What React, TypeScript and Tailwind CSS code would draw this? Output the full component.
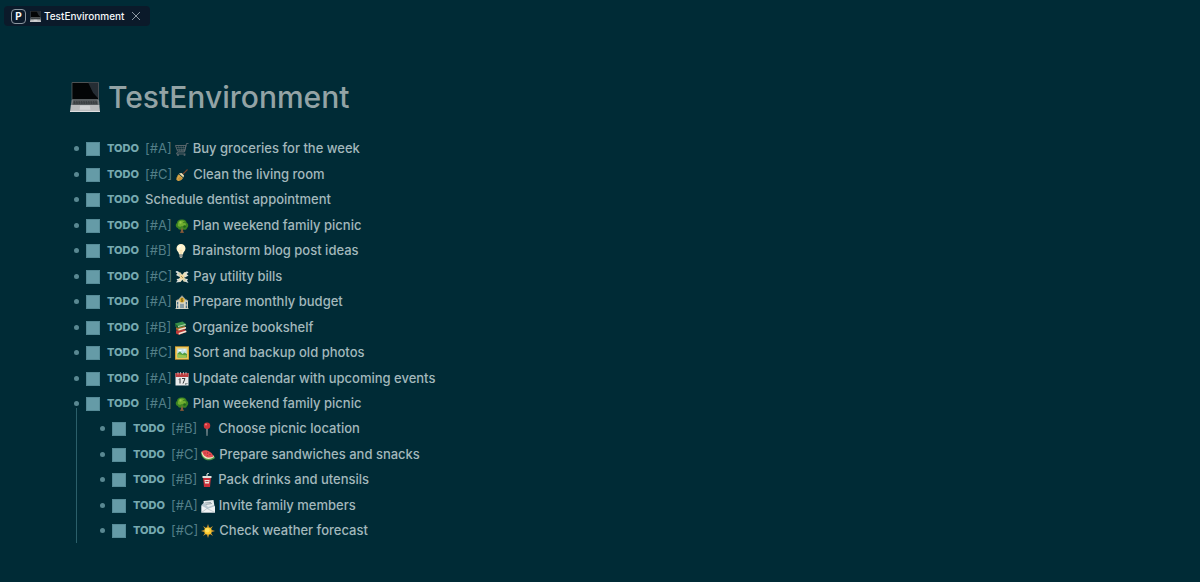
import type { ReactNode } from 'react';

type Task = { icon?: string; priority?: 'A' | 'B' | 'C'; text: string; children?: Task[] };

const tasks: Task[] = [
  { priority: 'A', icon: 'cart', text: 'Buy groceries for the week' },
  { priority: 'C', icon: 'broom', text: 'Clean the living room' },
  { text: 'Schedule dentist appointment' },
  { priority: 'A', icon: 'tree', text: 'Plan weekend family picnic' },
  { priority: 'B', icon: 'bulb', text: 'Brainstorm blog post ideas' },
  { priority: 'C', icon: 'money', text: 'Pay utility bills' },
  { priority: 'A', icon: 'bank', text: 'Prepare monthly budget' },
  { priority: 'B', icon: 'books', text: 'Organize bookshelf' },
  { priority: 'C', icon: 'photo', text: 'Sort and backup old photos' },
  { priority: 'A', icon: 'calendar', text: 'Update calendar with upcoming events' },
  {
    priority: 'A',
    icon: 'tree',
    text: 'Plan weekend family picnic',
    children: [
      { priority: 'B', icon: 'pin', text: 'Choose picnic location' },
      { priority: 'C', icon: 'melon', text: 'Prepare sandwiches and snacks' },
      { priority: 'B', icon: 'drink', text: 'Pack drinks and utensils' },
      { priority: 'A', icon: 'mail', text: 'Invite family members' },
      { priority: 'C', icon: 'sun', text: 'Check weather forecast' },
    ],
  },
];

const drawings: Record<string, ReactNode> = {
  laptop: (
    <>
      <rect x="1.5" y="0" width="25.5" height="17" rx="1" fill="#5b6063" />
      <rect x="2.2" y=".8" width="24" height="15.2" fill="#030506" />
      <path d="M17 .8h9.2v14.4L21.5 10z" fill="#252d34" />
      <path d="M1.5 16.5h25.5l.6 5.5H.8z" fill="#777c7e" />
      <path d="M3 17.2h22.4l.6 3.8H2.4z" fill="#34393b" />
      <path d="M3 18.4h22.4M2.8 19.7h23" stroke="#797e80" strokeWidth=".5" strokeDasharray="1 .6" />
      <path d="M.8 21.5h26.6l.6 6.5H0z" fill="#b9bbbc" />
      <path d="M9.5 22h9l.6 4H8.9z" fill="#d0d1d2" />
      <path d="M0 27h28v1H0z" fill="#dedfe0" />
    </>
  ),
  cart: (
    <g fill="none" stroke="#626c70" strokeWidth="1.8">
      <path d="M27 3h-4l-4 17H5l-2 4h18" />
      <path d="M1 7h21l-3 11H5z" />
      <path d="M2 11h19M4 15h16M7 7l2 11M12 7l1 11M17 7l-1 11" strokeWidth="1.1" />
      <circle cx="6" cy="26" r="1.3" />
      <circle cx="19" cy="26" r="1.3" />
    </g>
  ),
  broom: (
    <>
      <path d="M14 14L25 3" stroke="#7a432a" strokeWidth="2.2" />
      <path d="M7 12l9 8c-2 4-6 6-10 6l-4-3 2-1-2-2 3-2-1-2c2-1 3-2 3-4z" fill="#d9a647" />
      <path d="M8 11l9 8 1-4-5-5z" fill="#f1e2b3" />
      <path d="M11 18l-5 5M13 20l-4 4" stroke="#8d5b22" strokeWidth="1" />
    </>
  ),
  tree: (
    <>
      <path d="M12 16h5l-1 7 2 5h-8l2-5z" fill="#775035" />
      <path d="M14 1c5-1 9 3 9 6 5 3 4 9 1 11-1 4-6 5-9 2-4 3-9 1-9-2-5-1-6-8-2-10 0-5 5-8 10-7z" fill="#3b8422" />
      <path d="M13 3c4-1 7 2 7 5 3 2 2 5 0 6-4 2-6-1-8 1-4 2-8-1-6-5 0-4 3-7 7-7z" fill="#70ad30" />
      <circle cx="11" cy="7" r="2.3" fill="#9aca49" />
      <circle cx="19" cy="15" r="2.5" fill="#20621c" />
      <circle cx="18" cy="7" r="1.3" fill="#246a1c" />
      <path d="M14 17v9" stroke="#a17348" strokeWidth="1.3" />
    </>
  ),
  bulb: (
    <>
      <path d="M5 9a9 9 0 0118 0c0 5-5 7-5 12h-8c0-5-5-7-5-12z" fill="#fff4cd" />
      <path d="M9 9a5 5 0 015-5" stroke="#fff" strokeWidth="2" fill="none" />
      <path d="M13 20l-1-8 2 1 2-1-1 8" fill="none" stroke="#e8c88c" strokeWidth=".8" />
      <path d="M11 21h6v5l-2 2h-2l-2-2z" fill="#b5b6ae" />
      <path d="M11 23h6m-6 2h6" stroke="#626a65" strokeWidth=".8" />
    </>
  ),
  money: (
    <>
      <path d="M11 11C9 2 3 0 1 4l4 3-3 3 7 4zM17 11c2-9 8-10 10-6l-4 3 4 3-7 4zM10 17l-7 1 2 3-3 4 8-1 4-5zM18 17l8 1-2 3 3 5-8-3-4-4z" fill="#d9dedb" />
      <path d="M5 7l5-3 13 16-5 4z" fill="#d6d2ae" />
      <path d="M24 8l-5-4L6 20l5 4z" fill="#e9e1c2" />
      <circle cx="14" cy="14" r="4.5" fill="#f5d79a" />
      <path d="M12 12l4 4" stroke="#8e8656" strokeWidth="1.5" />
    </>
  ),
  bank: (
    <>
      <path d="M2 11l5-2 7-8 7 8 5 2v16H2z" fill="#d2cebb" />
      <path d="M1 11l6-3v2l-5 2zM27 11l-6-3v2l5 2zM6 9l8-8 8 8h-2l-6-5-6 5z" fill="#868f91" />
      <circle cx="14" cy="10" r="5" fill="#e2b52f" />
      <path d="M16 8c-3-2-5 1-2 2s2 4-2 2M14 6v8" fill="none" stroke="#644b15" strokeWidth="1.2" />
      <path d="M4 14h3v5H4zM21 14h3v5h-3zM4 21h3v5H4zM21 21h3v5h-3zM11 18h6v9h-6z" fill="#496f89" />
      <path d="M8 14v13M20 14v13M14 18v9M1 27h26" stroke="#f0ead7" strokeWidth="1.5" />
    </>
  ),
  books: (
    <>
      <path d="M4 19l17-3 4 6-15 6-6-3z" fill="#bc3938" />
      <path d="M9 24l15-5 1 3-15 5z" fill="#f2e9d8" />
      <path d="M4 13l17-3 4 4-15 6-6-3z" fill="#ad682b" />
      <path d="M9 16l15-4v3L9 19z" fill="#f2e9d8" />
      <path d="M2 5l15-4 7 5v3L8 14 2 10z" fill="#38934a" />
      <path d="M8 10l15-4v2L8 12z" fill="#bcd6b4" />
      <path d="M2 5l6 5v4l-6-4z" fill="#20622f" />
    </>
  ),
  photo: (
    <>
      <rect width="28" height="27" y=".5" fill="#c5972b" />
      <rect x="1.5" y="2" width="25" height="24" fill="#edc75c" />
      <rect x="4.5" y="5" width="19" height="18" fill="#c3e3e8" />
      <path d="M5 15l5-4 5 5 4-3 5 3v7H5z" fill="#529d43" />
      <path d="M5 17c5-2 10 3 18 1v5H5z" fill="#98c64d" />
      <path d="M7 9h6m4-1h4" stroke="#fff" strokeWidth="2" />
    </>
  ),
  calendar: (
    <>
      <path d="M1 2h26v25H1z" fill="#e8eaea" />
      <path d="M1 2h26v8H1z" fill="#bb3d3f" />
      <path d="M6 0v5m5-5v5m6-5v5m5-5v5" stroke="#dadddd" strokeWidth="1.4" />
      <path d="M8 15l2-2v10m4-10h6l-4 10" fill="none" stroke="#34393b" strokeWidth="2" />
      <path d="M20 27v-5h7z" fill="#8d9698" />
    </>
  ),
  pin: (
    <>
      <path d="M13 12h2l-.5 15-.5 1-.5-1z" fill="#a5afb2" stroke="#a5afb2" strokeWidth=".6" />
      <circle cx="14" cy="7.5" r="6.5" fill="#ce3439" />
      <circle cx="12" cy="5" r="2" fill="#f2797b" />
    </>
  ),
  melon: (
    <>
      <path d="M0 8c0 15 15 22 28 12l-2-4z" fill="#4e9848" />
      <path d="M1 7c1 14 14 19 25 11l-1-3z" fill="#f2ebca" />
      <path d="M2 6c2 12 13 16 23 11C21 7 11 2 2 6z" fill="#e64c50" />
      <path d="M8 9v2m5-2v2m-1 3l1 1m5-3v2" stroke="#42262c" strokeWidth="1.3" />
    </>
  ),
  drink: (
    <>
      <path d="M14 8V2l4-2" fill="none" stroke="#f0f0e7" strokeWidth="2" />
      <path d="M6 8h16l-2 20H8z" fill="#c92f3a" />
      <path d="M5 6h18v4H5z" fill="#e2e4df" />
      <path d="M9 14h10l-1 7h-8z" fill="#ece7dc" />
      <path d="M11 17h6" stroke="#c24951" strokeWidth="2" />
    </>
  ),
  mail: (
    <>
      <path d="M5 4l20-2 2 13-20 3z" fill="#e9edee" />
      <path d="M8 8l12-1M9 11l13-2" stroke="#758890" strokeWidth="1.4" />
      <path d="M1 12l5-5 8 9 12-4 2 15H1z" fill="#b8c8d0" />
      <path d="M1 13l12 7 15-6v13H1z" fill="#f1f3f4" />
      <path d="M1 27l11-8 16 8" fill="none" stroke="#a9b8be" strokeWidth="1.3" />
    </>
  ),
  sun: (
    <>
      <path d="M14 0l2 7h-4zM14 28l2-7h-4zM0 14l7-2v4zM28 14l-7-2v4zM4 4l6 4-2 2zM24 4l-6 4 2 2zM4 24l6-4-2-2zM24 24l-6-4 2-2z" fill="#e6a32e" />
      <circle cx="14" cy="14" r="7.5" fill="#ffc92d" />
      <circle cx="12.5" cy="12.5" r="4.5" fill="#ffe05b" />
    </>
  ),
};

function Emoji({ name, className }: { name: string; className: string }) {
  return (
    <svg viewBox="0 0 28 28" aria-hidden="true" className={`shrink-0 ${className}`}>
      {drawings[name]}
    </svg>
  );
}

function TaskList({ items, nested = false }: { items: Task[]; nested?: boolean }) {
  return (
    <ul className={nested ? '-mt-2 ml-1.5 border-l border-[#2b5f6a] pt-2 pl-[19px]' : ''}>
      {items.map((task, index) => (
        <li key={index} className="even:pt-px">
          <div className="flex h-[25px] items-center">
            <span className="flex w-3 shrink-0 justify-center">
              <span className="size-[5px] rounded-full bg-[#598892]" />
            </span>
            <label className="ml-1 flex items-center whitespace-nowrap">
              <input
                type="checkbox"
                className="size-3.5 shrink-0 appearance-none border border-[#568b97] bg-[#659ba7] checked:bg-[#2a7f90]"
              />
              <span className="ml-[7px] text-[11px] font-extrabold text-[#76a9b0]">TODO</span>
              {task.priority && <span className="ml-1.5 text-[#537f88]">[#{task.priority}]</span>}
              {task.icon && <Emoji name={task.icon} className="ml-[3px] size-3.5" />}
              <span className={task.icon ? 'ml-1 font-medium' : 'ml-1.5 font-medium'}>{task.text}</span>
            </label>
          </div>
          {task.children && <TaskList items={task.children} nested />}
        </li>
      ))}
    </ul>
  );
}

export default function App() {
  return (
    <div className="min-h-screen bg-[#002b36] font-['Inter',sans-serif] text-[13px] text-[#a3b8bc]">
      <header className="flex px-1 pt-1.5">
        <div className="flex h-5 items-center rounded-sm bg-[#0b1a2a] pr-[9px] pl-[7px] text-[10px] font-medium text-[#f4f7f8]">
          <span className="flex size-[15px] items-center justify-center rounded-[4px] border border-[#8b969f] text-[10px] font-bold">P</span>
          <a href="#test-environment" className="ml-1 flex items-center gap-[3px]">
            <Emoji name="laptop" className="size-[11px]" />
            TestEnvironment
          </a>
          <button type="button" aria-label="Close tab" className="ml-[7px]">
            <svg viewBox="0 0 10 10" className="size-[10px]" fill="none" stroke="#8c98a2" strokeWidth="1">
              <path d="M1 1l8 8M9 1L1 9" />
            </svg>
          </button>
        </div>
      </header>
      <main id="test-environment" className="px-[70px] pt-[50px] pb-9">
        <h1 className="flex items-center gap-2 text-[30px] leading-[42px] font-medium text-[#93a3a5]">
          <Emoji name="laptop" className="size-[30px]" />
          TestEnvironment
        </h1>
        <div className="mt-[18px]">
          <TaskList items={tasks} />
        </div>
      </main>
    </div>
  );
}
